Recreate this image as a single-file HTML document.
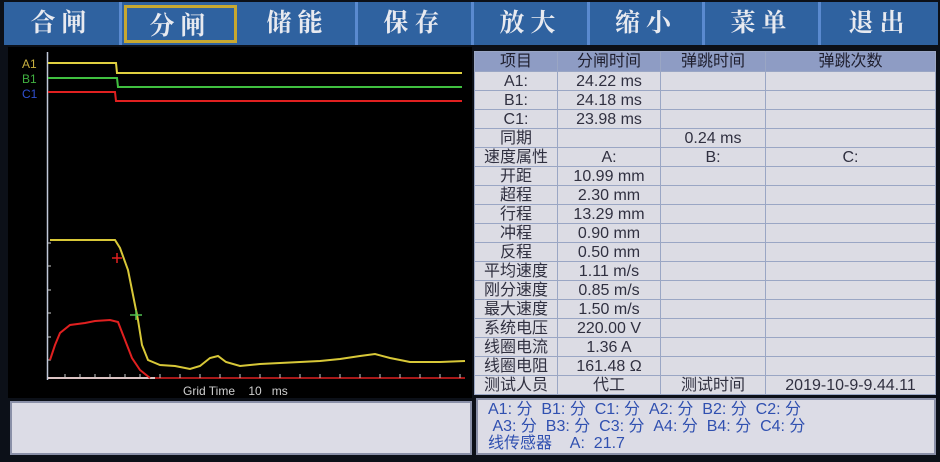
<!DOCTYPE html>
<html><head><meta charset="utf-8"><style>
*{margin:0;padding:0;box-sizing:border-box}
body{width:940px;height:462px;background:#0c1018;position:relative;overflow:hidden;font-family:"Liberation Sans","Noto Sans CJK SC",sans-serif}
.bar{position:absolute;left:4px;top:2px;width:934px;height:43px;background:#2f62a0}
.btn{position:absolute;top:2px;height:43px;color:#e8eaf0;font-family:"Liberation Serif","Noto Serif CJK SC",serif;font-size:25px;font-weight:bold;letter-spacing:6px;text-align:center;line-height:43px;border-right:3px solid #5a8ad0}
.sel{border:3px solid #c8a830;line-height:37px;top:5px;height:38px}
.left{position:absolute;left:8px;top:47px;width:464px;height:351px;background:#000}
table{position:absolute;left:474px;top:51px;width:462px;border-collapse:collapse;background:#dcdce4;font-size:16px;color:#303040}
td{border:1px solid #9aa6c4;height:19px;line-height:17px;text-align:center;padding:0;white-space:nowrap;overflow:hidden}
tr.h td{background:#8e9cc4;color:#202030;height:20px}
.bl{position:absolute;left:10px;top:401px;width:462px;height:54px;background:#dcdce6;border:2px solid #8a90a8}
.br{position:absolute;left:476px;top:398px;width:460px;height:57px;background:#dcdce6;border:2px solid #8a90a8;color:#3050b0;font-size:16px;line-height:17px;padding:1px 0 0 10px;white-space:pre}
</style></head><body>
<div class="bar"></div>
<div class="btn" style="left:4px;width:118px">合闸</div>
<div class="btn sel" style="left:124px;width:113px">分闸</div>
<div class="btn" style="left:240px;width:118px">储能</div>
<div class="btn" style="left:358px;width:116px">保存</div>
<div class="btn" style="left:474px;width:116px">放大</div>
<div class="btn" style="left:590px;width:115px">缩小</div>
<div class="btn" style="left:705px;width:116px">菜单</div>
<div class="btn" style="left:821px;width:117px;border:none">退出</div>
<div class="left"></div>
<svg style="position:absolute;left:0;top:0" width="472" height="400">
<g font-size="12" font-family="Liberation Sans">
<text x="22" y="68" fill="#c8b040">A1</text><text x="22" y="83" fill="#40b040">B1</text><text x="22" y="98" fill="#3050d0">C1</text>
</g>
<line x1="47.5" y1="52" x2="47.5" y2="380" stroke="#c0c8d8" stroke-width="1.5"/>
<polyline points="48,63 116,63 117,73 462,73" fill="none" stroke="#e0d040" stroke-width="2"/>
<polyline points="48,78 117,78 118,87 462,87" fill="none" stroke="#40c040" stroke-width="2"/>
<polyline points="48,92 115,92 116,101 462,101" fill="none" stroke="#e02020" stroke-width="2"/>
<line x1="48" y1="378" x2="465" y2="378" stroke="#e02020" stroke-width="1.5"/>
<line x1="48" y1="378" x2="155" y2="378" stroke="#ffffff" stroke-width="1.5"/>
<g stroke="#ccc" stroke-width="1">
<path d="M48 243h3M48 266h3M48 290h3M48 313h3M48 337h3M48 360h3"/>
<path d="M65 374v4M80 374v4M95 374v4M110 374v4M125 374v4M140 374v4M160 374v4M180 374v4M200 374v4M220 374v4M240 374v4M260 374v4M280 374v4M300 374v4M320 374v4M340 374v4M360 374v4M380 374v4M400 374v4M420 374v4M440 374v4M460 374v4"/>
</g>
<polyline points="50,240 115,240 120,248 128,270 133,295 138,320 142,345 148,360 160,365 175,366 190,369 200,366 210,358 218,356 226,362 240,366 260,364 280,363 300,362 320,361 340,359 360,356 375,354 390,358 410,362 440,362 465,361" fill="none" stroke="#d8c838" stroke-width="2"/>
<polyline points="50,360 55,345 60,333 70,325 85,323 95,321 110,320 118,322 125,340 132,358 140,370 150,378" fill="none" stroke="#e02020" stroke-width="2"/>
<path d="M112 258h10M117 253v10" stroke="#e02020" stroke-width="1.5"/>
<path d="M130 315h12M136 310v10" stroke="#50c050" stroke-width="1.5"/>
<text x="183" y="395" font-size="12" fill="#d0d0d0" font-family="Liberation Sans" xml:space="preserve">Grid Time    10   ms</text>
</svg>
<table>
<tr class="h"><td style="width:83px">项目</td><td style="width:103px">分闸时间</td><td style="width:105px">弹跳时间</td><td>弹跳次数</td></tr>
<tr><td>A1:</td><td>24.22 ms</td><td></td><td></td></tr>
<tr><td>B1:</td><td>24.18 ms</td><td></td><td></td></tr>
<tr><td>C1:</td><td>23.98 ms</td><td></td><td></td></tr>
<tr><td>同期</td><td></td><td>0.24 ms</td><td></td></tr>
<tr><td>速度属性</td><td>A:</td><td>B:</td><td>C:</td></tr>
<tr><td>开距</td><td>10.99 mm</td><td></td><td></td></tr>
<tr><td>超程</td><td>2.30 mm</td><td></td><td></td></tr>
<tr><td>行程</td><td>13.29 mm</td><td></td><td></td></tr>
<tr><td>冲程</td><td>0.90 mm</td><td></td><td></td></tr>
<tr><td>反程</td><td>0.50 mm</td><td></td><td></td></tr>
<tr><td>平均速度</td><td>1.11 m/s</td><td></td><td></td></tr>
<tr><td>刚分速度</td><td>0.85 m/s</td><td></td><td></td></tr>
<tr><td>最大速度</td><td>1.50 m/s</td><td></td><td></td></tr>
<tr><td>系统电压</td><td>220.00 V</td><td></td><td></td></tr>
<tr><td>线圈电流</td><td>1.36 A</td><td></td><td></td></tr>
<tr><td>线圈电阻</td><td>161.48 Ω</td><td></td><td></td></tr>
<tr><td>测试人员</td><td>代工</td><td>测试时间</td><td>2019-10-9-9.44.11</td></tr>
</table>
<div class="bl"></div>
<div class="br">A1: 分  B1: 分  C1: 分  A2: 分  B2: 分  C2: 分
 A3: 分  B3: 分  C3: 分  A4: 分  B4: 分  C4: 分
线传感器    A:  21.7</div>
</body></html>
